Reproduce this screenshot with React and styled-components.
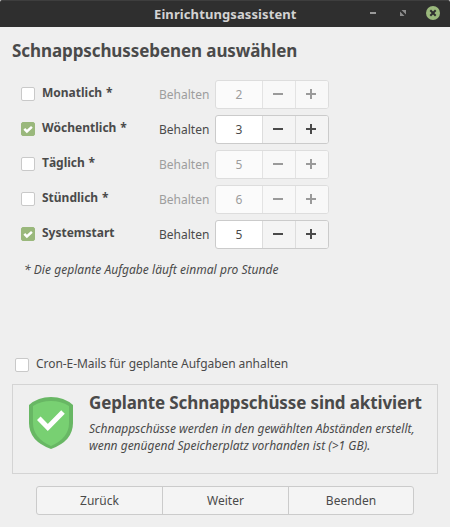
import React, { useState } from "react";
import styled, { createGlobalStyle } from "styled-components";

const Global = createGlobalStyle`
  * { box-sizing: border-box; }
  html, body { margin: 0; padding: 0; background: #efefef; }
  body { font-family: "Noto Sans", sans-serif; font-size: 12px; color: #4a4a4a; overflow: hidden; }
  button { font: inherit; color: inherit; padding: 0; margin: 0; }
`;

const Window = styled.div`
  width: 450px;
  height: 527px;
  display: flex;
  flex-direction: column;
  background: #efefef;
`;

const TitleBar = styled.header`
  height: 27px;
  flex: none;
  display: grid;
  grid-template-columns: 1fr 80px;
  align-items: center;
  background: #2f2f2f;
  border-top: 1px solid #3e3e3e;
  border-radius: 2px 2px 0 0;
`;

const WindowTitle = styled.div`
  padding-left: 154px;
  font-size: 13px;
  font-weight: 700;
  line-height: 18px;
  color: #d3d3d3;
  white-space: nowrap;
  letter-spacing: 0.1px;
`;

const WindowControls = styled.svg`
  width: 80px;
  height: 26px;
  display: block;
`;

const Content = styled.main`
  flex: 1;
  display: flex;
  flex-direction: column;
`;

const Heading = styled.h1`
  margin: 12px 0 0 12px;
  font-size: 17px;
  line-height: 24px;
  font-weight: 700;
  letter-spacing: -0.09px;
  white-space: nowrap;
`;

const Levels = styled.section`
  margin-top: 17px;
  padding-left: 21px;
  display: flex;
  flex-direction: column;
  gap: 6px;
`;

const LevelRow = styled.div`
  height: 29px;
  display: grid;
  grid-template-columns: 21px 117px 56px 114px;
`;

const CheckBox = styled.button`
  width: 14px;
  height: 14px;
  margin-top: ${(p) => p.$top || "0"};
  display: block;
  flex: none;
  border: 1px solid ${(p) => (p.$checked ? "#9ab87c" : "#c9c9c9")};
  border-radius: 2px;
  background: ${(p) => (p.$checked ? "#9ab87c" : "#ffffff")};
`;

const Tick = styled.svg`
  display: block;
  width: 12px;
  height: 12px;
`;

const LevelName = styled.span`
  margin-top: 5px;
  font-weight: 700;
  line-height: 16px;
  word-spacing: 0.6px;
  font-kerning: none;
  white-space: nowrap;
`;

const KeepLabel = styled.span`
  margin-top: 7px;
  line-height: 16px;
  color: ${(p) => (p.$off ? "#9d9d9d" : "#4a4a4a")};
`;

const Spin = styled.div`
  height: 29px;
  display: grid;
  grid-template-columns: 46px 33px 33px;
  border: 1px solid ${(p) => (p.$off ? "#dddddd" : "#cbcbcb")};
  border-radius: 3px;
  overflow: hidden;
  color: ${(p) => (p.$off ? "#9d9d9d" : "#4a4a4a")};
  background: ${(p) => (p.$off ? "#fbfbfb" : "#ffffff")};
`;

const SpinValue = styled.span`
  padding-top: 6px;
  line-height: 16px;
  text-align: center;
`;

const SpinButton = styled.button`
  border: 0;
  border-left: 1px solid ${(p) => (p.$off ? "#e3e3e3" : "#dddddd")};
  background: ${(p) => (p.$off ? "#f8f8f8" : "#f4f4f4")};
  color: ${(p) => (p.$off ? "#9a9a9a" : "#4a4a4a")};
`;

const Sign = styled.svg`
  display: block;
  width: 32px;
  height: 27px;
`;

const Note = styled.p`
  margin: 13px 0 0 24px;
  line-height: 16px;
  font-style: italic;
  letter-spacing: 0.04px;
  white-space: nowrap;
`;

const CronOption = styled.div`
  margin: 78px 0 0 15px;
  display: flex;
  gap: 7px;
  height: 17px;
  line-height: 16px;
`;

const CronText = styled.span`
  letter-spacing: -0.06px;
  white-space: nowrap;
`;

const StatusPanel = styled.section`
  height: 90px;
  margin: 11px 12px 0;
  border: 1px solid #d4d4d4;
  display: grid;
  grid-template-columns: 76px 1fr;
`;

const Shield = styled.svg`
  width: 44px;
  height: 53px;
  margin: 12px 0 0 16px;
`;

const StatusTitle = styled.h2`
  margin: 6px 0 0;
  font-size: 17px;
  line-height: 24px;
  font-weight: 700;
  letter-spacing: -0.12px;
  white-space: nowrap;
`;

const StatusText = styled.p`
  margin: 5px 0 0;
  font-style: italic;
  line-height: 17px;
  white-space: nowrap;
`;

const Actions = styled.footer`
  width: 378px;
  height: 29px;
  margin: 12px 0 0 36px;
  display: grid;
  grid-template-columns: 126px 126px 124px;
  border: 1px solid #cbcbcb;
  border-radius: 3px;
  background: #f4f4f4;
  overflow: hidden;
`;

const ActionButton = styled.button`
  border: 0;
  border-right: ${(p) => (p.$last ? "0" : "1px solid #cbcbcb")};
  background: transparent;
  line-height: 16px;
`;

const LEVELS = [
  { name: "Monatlich *", keep: 2, on: false },
  { name: "Wöchentlich *", keep: 3, on: true },
  { name: "Täglich *", keep: 5, on: false },
  { name: "Stündlich *", keep: 6, on: false },
  { name: "Systemstart", keep: 5, on: true },
];

function Check({ checked, onToggle, top, label }) {
  return (
    <CheckBox $checked={checked} $top={top} onClick={onToggle} role="checkbox" aria-checked={checked} aria-label={label}>
      {checked && (
        <Tick viewBox="0 0 12 12">
          <path d="M2.3 5.9 L4.9 8.5 L9.9 3.9" fill="none" stroke="#fff" strokeWidth="2.5" />
        </Tick>
      )}
    </CheckBox>
  );
}

function Level({ level, onToggle, onStep }) {
  const off = !level.on;
  return (
    <LevelRow>
      <Check checked={level.on} top="7px" onToggle={onToggle} label={level.name} />
      <LevelName>{level.name}</LevelName>
      <KeepLabel $off={off}>Behalten</KeepLabel>
      <Spin $off={off}>
        <SpinValue>{level.keep}</SpinValue>
        <SpinButton $off={off} disabled={off} onClick={() => onStep(-1)} aria-label="−">
          <Sign viewBox="0 0 32 27"><path d="M10 12h10v2h-10z" fill="currentColor" /></Sign>
        </SpinButton>
        <SpinButton $off={off} disabled={off} onClick={() => onStep(1)} aria-label="+">
          <Sign viewBox="0 0 32 27"><path d="M10 12h4v-4h2v4h4v2h-4v4h-2v-4h-4z" fill="currentColor" /></Sign>
        </SpinButton>
      </Spin>
    </LevelRow>
  );
}

export default function App() {
  const [levels, setLevels] = useState(LEVELS);
  const [cron, setCron] = useState(false);
  const update = (i, fn) => setLevels((all) => all.map((l, k) => (k === i ? fn(l) : l)));

  return (
    <>
      <Global />
      <Window>
        <TitleBar>
          <WindowTitle>Einrichtungsassistent</WindowTitle>
          <WindowControls viewBox="0 0 80 26">
            <rect x="0" y="11" width="6" height="2" fill="#999" />
            <path d="M31.5 9H36v4.5zM30 10.5v4.5h4.5z" fill="#8c8c8c" />
            <circle cx="63" cy="12" r="7" fill="#9ab87c" />
            <path d="M60.3 9.3l5.4 5.4M65.7 9.3l-5.4 5.4" stroke="#2f2f2f" strokeWidth="2" />
          </WindowControls>
        </TitleBar>
        <Content>
          <Heading>Schnappschussebenen auswählen</Heading>
          <Levels>
            {levels.map((level, i) => (
              <Level
                key={level.name}
                level={level}
                onToggle={() => update(i, (l) => ({ ...l, on: !l.on }))}
                onStep={(d) => update(i, (l) => ({ ...l, keep: Math.max(1, l.keep + d) }))}
              />
            ))}
          </Levels>
          <Note>* Die geplante Aufgabe läuft einmal pro Stunde</Note>
          <CronOption>
            <Check checked={cron} top="2px" onToggle={() => setCron(!cron)} label="Cron" />
            <CronText>Cron-E-Mails für geplante Aufgaben anhalten</CronText>
          </CronOption>
          <StatusPanel>
            <Shield viewBox="0 0 44 53">
              <path d="M0 8Q9 0 22 0T44 8V26Q44 44 22 52Q0 44 0 26Z" fill="#68b764" />
              <path d="M4 9Q12 4 22 4T40 9V26Q40 41 22 49Q4 41 4 26Z" fill="#78d072" />
              <path d="M9.8 21.2L18.8 30.5L34 15" fill="none" stroke="#fff" strokeWidth="5" />
            </Shield>
            <div>
              <StatusTitle>Geplante Schnappschüsse sind aktiviert</StatusTitle>
              <StatusText>
                Schnappschüsse werden in den gewählten Abständen erstellt,
                <br />
                wenn genügend Speicherplatz vorhanden ist (&gt;1 GB).
              </StatusText>
            </div>
          </StatusPanel>
          <Actions>
            <ActionButton>Zurück</ActionButton>
            <ActionButton>Weiter</ActionButton>
            <ActionButton $last>Beenden</ActionButton>
          </Actions>
        </Content>
      </Window>
    </>
  );
}
